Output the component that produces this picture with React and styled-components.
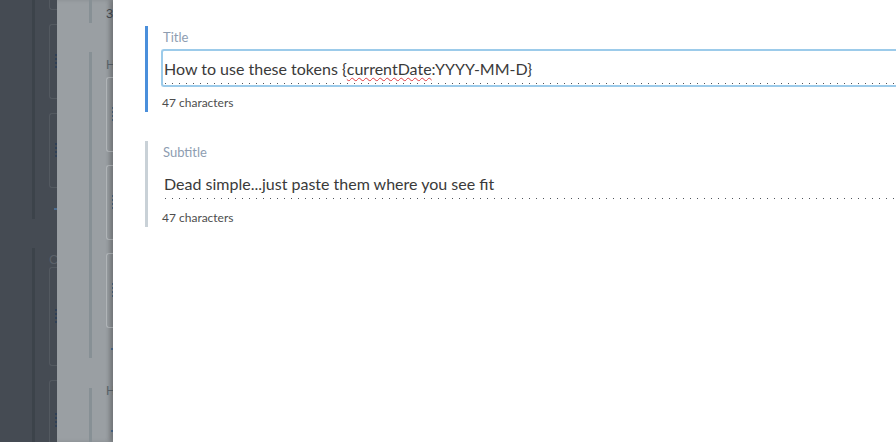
import React from 'react'
import styled, { createGlobalStyle } from 'styled-components'

const GlobalStyle = createGlobalStyle`
  html, body {
    margin: 0;
    padding: 0;
    height: 100%;
    overflow: hidden;
    font-family: Lato, "Open Sans", sans-serif;
  }
  #root {
    height: 100%;
  }
`

const Screen = styled.div`
  display: flex;
  width: 896px;
  height: 442px;
  overflow: hidden;
  background: #fff;
`

/* dimmed page that sits under the drawers */
const Pane = styled.div`
  flex: 0 0 ${p => p.$width}px;
  display: flex;
  background: ${p => p.$bg};
  padding-left: ${p => p.$railLeft}px;
  box-sizing: border-box;
  overflow: hidden;
  box-shadow: ${p => p.$shadow || 'none'};
`

const Rail = styled.div`
  flex: 0 0 3px;
  display: flex;
  flex-direction: column;
`

const RailSegment = styled.div`
  height: ${p => p.$h}px;
  margin-top: ${p => p.$gap}px;
  background: ${p => p.$color};
  flex-shrink: 0;
`

const Stubs = styled.div`
  flex: 1;
  display: flex;
  flex-direction: column;
  margin-left: ${p => p.$offset}px;
`

const CardStub = styled.div`
  flex-shrink: 0;
  height: ${p => p.$h}px;
  margin-top: ${p => p.$gap}px;
  border: 1px solid ${p => p.$color};
  border-right: none;
  border-radius: 3px 0 0 3px;
  display: flex;
  align-items: center;
  justify-content: flex-end;
  box-sizing: border-box;
`

const Grip = styled.span`
  width: 2px;
  height: 15px;
  background-image: linear-gradient(to bottom, ${p => p.$color} 2px, transparent 2px);
  background-size: 2px 4px;
  margin-right: 1px;
`

const Dash = styled.div`
  flex-shrink: 0;
  height: 2px;
  width: 4px;
  margin-top: ${p => p.$gap}px;
  margin-left: auto;
  background: #4c6c90;
`

const Glyph = styled.div`
  flex-shrink: 0;
  margin-top: ${p => p.$gap}px;
  font-family: "Liberation Sans", sans-serif;
  font-size: 13px;
  line-height: 13px;
  height: 13px;
  color: ${p => p.$color};
  white-space: nowrap;
`

/* drawer */
const Drawer = styled.div`
  flex: 1;
  display: flex;
  flex-direction: column;
  gap: 29px;
  padding: 26px 0 0 32px;
  background: #fff;
  box-shadow: -3px 0 5px rgba(0, 0, 0, 0.18);
  position: relative;
  z-index: 1;
  min-width: 0;
`

const Field = styled.section`
  display: flex;
  flex-direction: column;
  border-left: 3px solid ${p => (p.$active ? '#4a8fdb' : '#c9d1d7')};
  padding: 0 0 2px 13px;
`

const Label = styled.label`
  font-size: 13px;
  line-height: 22px;
  color: #8e9db1;
  padding-left: 2px;
`

const InputBox = styled.div`
  margin-top: 1px;
  height: 38px;
  display: flex;
  align-items: center;
  padding: 0 4px 0 1px;
  border: 2px solid ${p => (p.$active ? '#9ccbea' : 'transparent')};
  border-right: none;
  border-radius: 3px 0 0 3px;
  box-sizing: border-box;
  font-size: 16px;
  color: #3a3a3a;
  white-space: nowrap;
  background-image: linear-gradient(to right, #4f545b 1px, transparent 1px);
  background-size: 7px 1px;
  background-repeat: repeat-x;
  background-position: 2px calc(100% - 1px);
`

const Misspelled = styled.span`
  text-decoration: underline wavy #e0393e;
  text-decoration-thickness: 1px;
  text-underline-offset: 2px;
`

const Count = styled.div`
  margin-top: 8px;
  font-size: 12px;
  line-height: 15px;
  color: #4d4d4d;
  padding-left: 1px;
`

export default function App() {
  return (
    <Screen>
      <GlobalStyle />

      <Pane $width={57} $bg="#454b53" $railLeft={32}>
        <Rail>
          <RailSegment $h={219} $gap={0} $color="#3c434a" />
          <RailSegment $h={200} $gap={29} $color="#3c434a" />
        </Rail>
        <Stubs $offset={14}>
          <CardStub $h={20} $gap={-10} $color="#535960" />
          <CardStub $h={75} $gap={14} $color="#535960"><Grip $color="#2f3f55" /></CardStub>
          <CardStub $h={75} $gap={14} $color="#535960"><Grip $color="#2f3f55" /></CardStub>
          <Dash $gap={20} />
          <Glyph $gap={43} $color="#5a6068">C</Glyph>
          <CardStub $h={99} $gap={1} $color="#535960"><Grip $color="#2f3f55" /></CardStub>
          <CardStub $h={80} $gap={14} $color="#535960"><Grip $color="#2f3f55" /></CardStub>
        </Stubs>
      </Pane>

      <Pane $width={56} $bg="#9a9fa3" $railLeft={32} $shadow="inset -3px 0 4px rgba(0,0,0,0.12)">
        <Rail>
          <RailSegment $h={23} $gap={0} $color="#879095" />
          <RailSegment $h={306} $gap={29} $color="#879095" />
          <RailSegment $h={60} $gap={30} $color="#879095" />
        </Rail>
        <Stubs $offset={14}>
          <Glyph $gap={7} $color="#454a50">3</Glyph>
          <Glyph $gap={38} $color="#5b646c">H</Glyph>
          <CardStub $h={75} $gap={6} $color="#b3b7ba"><Grip $color="#4c6580" /></CardStub>
          <CardStub $h={75} $gap={13} $color="#b3b7ba"><Grip $color="#4c6580" /></CardStub>
          <CardStub $h={75} $gap={13} $color="#b3b7ba"><Grip $color="#4c6580" /></CardStub>
          <Dash $gap={20} />
          <Glyph $gap={34} $color="#5b646c">H</Glyph>
          <Dash $gap={33} />
        </Stubs>
      </Pane>

      <Drawer>
        <Field $active>
          <Label>Title</Label>
          <InputBox $active>
            How to use these tokens {'{'}<Misspelled>currentDate</Misspelled>:YYYY-MM-D{'}'}
          </InputBox>
          <Count>47 characters</Count>
        </Field>

        <Field>
          <Label>Subtitle</Label>
          <InputBox>Dead simple...just paste them where you see fit</InputBox>
          <Count>47 characters</Count>
        </Field>
      </Drawer>
    </Screen>
  )
}
